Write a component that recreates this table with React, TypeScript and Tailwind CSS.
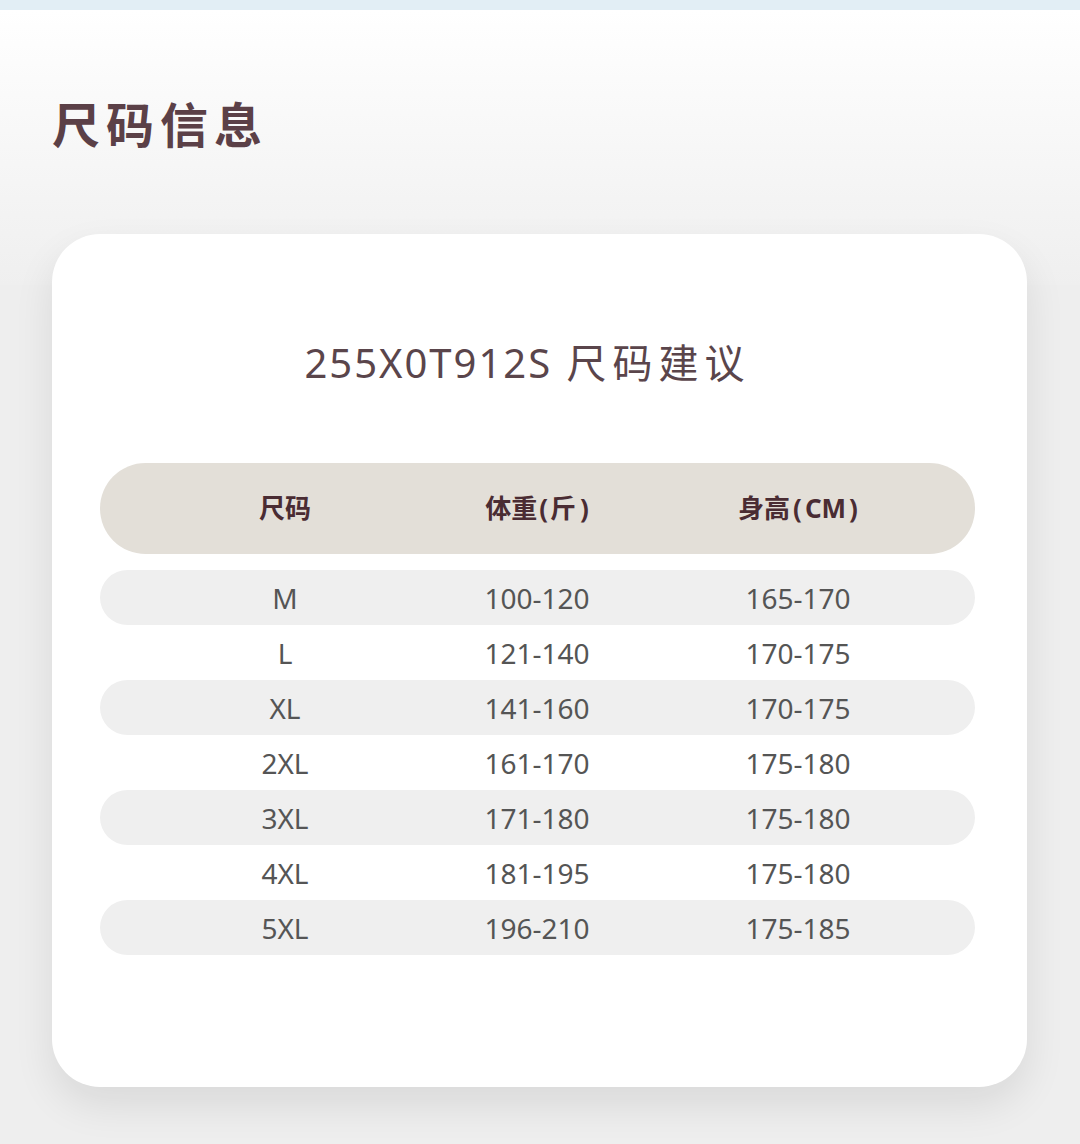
const rows = [
  { size: "M", weight: "100-120", height: "165-170" },
  { size: "L", weight: "121-140", height: "170-175" },
  { size: "XL", weight: "141-160", height: "170-175" },
  { size: "2XL", weight: "161-170", height: "175-180" },
  { size: "3XL", weight: "171-180", height: "175-180" },
  { size: "4XL", weight: "181-195", height: "175-180" },
  { size: "5XL", weight: "196-210", height: "175-185" },
]

const font = "font-['Noto_Sans','Noto_Sans_CJK_SC',sans-serif]"

export default function App() {
  return (
    <div className={`w-[1080px] h-[1144px] overflow-hidden bg-[#eeeeee] ${font}`}>
      {/* top strip */}
      <div className="h-[10px] bg-[#e2eef5]" />

      {/* heading band */}
      <div className="h-[275px] bg-gradient-to-b from-white to-[#efefef] px-[52px] pt-[80px]">
        <h1 className="text-[48px] leading-[70px] font-bold tracking-[6px] text-[#5b4047]">尺码信息</h1>
      </div>

      {/* card */}
      <div className="-mt-[51px] ml-[52px] w-[975px] h-[853px] rounded-[48px] bg-white shadow-[0_18px_40px_rgba(0,0,0,0.09)] pl-[48px] pr-[52px] pt-[104px]">
        <h2 className="pr-[20px] text-center text-[40px] leading-[50px] text-[#5a454b]">
          <span className="tracking-[2px]">255X0T912S</span>{" "}
          <span className="ml-[4px] tracking-[6px]">尺码建议</span>
        </h2>

        <div className="mt-[75px]">
          <div className="grid h-[91px] grid-cols-[260px_244px_278px] items-center rounded-full bg-[#e3dfd8] pl-[55px] text-[26px] font-bold text-[#4a2c33]">
            <div className="text-center">尺码</div>
            <div className="text-center">
              体重<span className="mx-[2px]">(</span>斤<span className="ml-[4px]">)</span>
            </div>
            <div className="text-center">
              身高<span className="mx-[3px]">(</span>CM<span className="ml-[3px]">)</span>
            </div>
          </div>

          <div className="mt-[16px] flex flex-col">
            {rows.map((r, i) => (
              <div
                key={r.size}
                className={
                  "grid h-[55px] grid-cols-[260px_244px_278px] items-center rounded-full pl-[55px] text-[28px] text-[#555555] " +
                  (i % 2 === 0 ? "bg-[#efefef]" : "bg-white")
                }
              >
                <div className="text-center">{r.size}</div>
                <div className="text-center">{r.weight}</div>
                <div className="text-center">{r.height}</div>
              </div>
            ))}
          </div>
        </div>
      </div>
    </div>
  )
}
